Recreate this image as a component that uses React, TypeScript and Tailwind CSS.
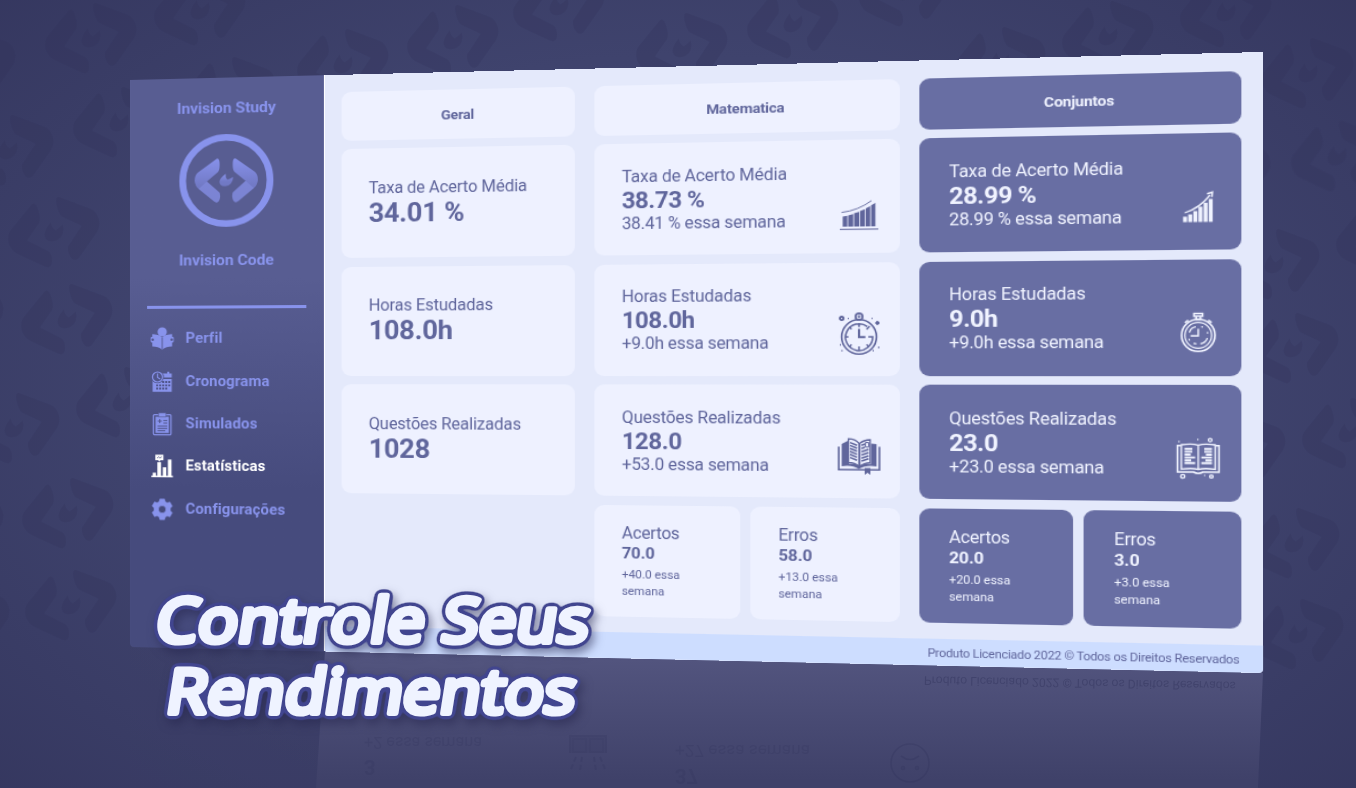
import React from "react";

const LEFT_CHEVRON =
  "M-9.5 -21.5L-27.5 -8.5Q-31 -6 -31 0Q-30.5 5 -27 8L-12 20.5Q-9 23 -7 20Q-5 16 -6.5 12L-19 .8L-8 -8.6Q-6 -11 -6.5 -18Q-7 -22.8 -9.5 -21.5Z";
const RIGHT_CHEVRON =
  "M9.5 -21.5L27.5 -8.5Q31 -6 31 0Q30.5 5 27 8L12 20.5Q9 23 7 20Q5 16 6.5 12L19 .8L8 -8.6Q6 -11 6.5 -18Q7 -22.8 9.5 -21.5Z";
const FLAME =
  "M-.5 -6.5Q-1 -3 1.2 -.8Q3 -1 6.8 -3.2Q6.5 5 -1 5.8Q-6.8 5.5 -6.6 1Q-6.3 -2.5 -.5 -6.5Z";

const PATTERN: [number, number][] = [
  [91, 38], [200, 10], [343, 64], [453, 40], [559, 6], [682, 48], [793, 23], [905, -9],
  [1000, 62], [1108, 36], [1226, 12], [1308, 73], [1337, 156], [1274, 264], [1293, 348],
  [1348, 433], [1240, 450], [1294, 543], [1298, 634], [1382, 238], [1225, 172], [8, 150],
  [119, 122], [54, 232], [230, 92], [67, 319], [14, 428], [122, 402], [68, 513], [71, 605],
  [-42, 318], [-42, 525], [-36, 620], [-30, 65],
];

function Backdrop() {
  return (
    <svg className="absolute inset-0" width="1356" height="788" viewBox="0 0 1356 788">
      <g fill="#34345c" opacity=".28">
        {PATTERN.map(([x, y]) => (
          <g key={`${x}-${y}`} transform={`translate(${x} ${y}) rotate(-15) scale(1.5)`}>
            <path d={LEFT_CHEVRON} />
            <path d={RIGHT_CHEVRON} />
            <path d={FLAME} />
          </g>
        ))}
      </g>
    </svg>
  );
}

function Reflection() {
  return (
    <div className="absolute inset-0 text-[#2e3059]">
      <div className="absolute inset-0 bg-linear-to-b from-[#3d4069] from-82% to-[#3a3c64] to-100% [clip-path:polygon(130px_647px,325px_651px,318px_788px,130px_788px)] opacity-60" />
      <div className="absolute inset-0 bg-linear-to-b from-[#53557f] from-83% to-[#3f4169] to-99% [clip-path:polygon(325px_651px,1263px_673px,1258px_788px,316px_788px)]" />
      <div className="absolute top-[671px] left-[924px] origin-left rotate-1 -scale-y-100 text-[12.2px] whitespace-nowrap opacity-40">
        Produto Licenciado 2022 © Todos os Direitos Reservados
      </div>
      <div className="absolute top-[732px] left-[364px] flex -scale-y-100 flex-col text-[16.2px] leading-[21px] opacity-20">
        <b className="text-xl">3</b>
        <span>+2 essa semana</span>
      </div>
      <div className="absolute top-[740px] left-[675px] flex -scale-y-100 flex-col text-[17.2px] leading-[22px] opacity-20">
        <b className="text-xl">37</b>
        <span>+27 essa semana</span>
      </div>
      <svg className="absolute top-[733px] left-[568px] opacity-20" width="40" height="42" viewBox="0 0 40 42" fill="none" stroke="currentColor" strokeWidth="2">
        <path d="M2 20V3H38V20M5 6H18V19H5ZM22 6H35V19H22Z" fill="currentColor" fillOpacity=".5" />
        <path d="M8 24L3 36M14 24L12 38M26 24L28 38M32 24L37 36" strokeDasharray="5 3" />
      </svg>
      <svg className="absolute top-[741px] left-[888px] opacity-25" width="44" height="44" viewBox="0 0 44 44" fill="none" stroke="currentColor" strokeWidth="1.6">
        <circle cx="22" cy="22" r="19" />
        <path d="M13 15Q22 22 31 15" />
        <circle cx="15" cy="27" r="1.5" />
        <circle cx="29" cy="27" r="1.5" />
      </svg>
    </div>
  );
}

function Logo() {
  return (
    <svg width="94" height="94" viewBox="-47 -47 94 94">
      <defs>
        <linearGradient id="blade" x1="0" y1="0" x2="0" y2="1">
          <stop offset="0" stopColor="#8791ea" />
          <stop offset=".6" stopColor="#727ac6" />
          <stop offset="1" stopColor="#6f77c2" />
        </linearGradient>
      </defs>
      <circle r="42.8" fill="none" stroke="#8893ec" strokeWidth="6.6" />
      <g fill="url(#blade)">
        <path d={LEFT_CHEVRON} />
        <path d={RIGHT_CHEVRON} />
        <path d={FLAME} />
      </g>
      <g fill="#8790e4" opacity=".5">
        <path d="M-19 .8L-27 8L-12 20.5Q-9 23 -7 20Q-5 16 -6.5 12Z" />
        <path d="M19 .8L27 8L12 20.5Q9 23 7 20Q5 16 6.5 12Z" />
      </g>
    </svg>
  );
}

const NAV_BACK = "#50558a";

function ProfileIcon() {
  return (
    <svg width="24" height="24" viewBox="0 0 24 24" fill="currentColor">
      <circle cx="12" cy="5" r="4.6" />
      <path d="M12 10.4Q8 7 2.2 7.3V10H1.4Q.6 10 .6 11.3V14Q.6 15.4 1.4 15.4H2.2V19.5Q8 19.5 12 22.8Q16 19.5 21.8 19.5V15.4H22.6Q23.4 15.4 23.4 14V11.3Q23.4 10 22.6 10H21.8V7.3Q16 7 12 10.4Z" />
      <path d="M12 10.6V22.5" stroke={NAV_BACK} strokeWidth=".9" />
      <circle cx="2.6" cy="12.7" r="1.2" fill={NAV_BACK} />
      <circle cx="21.4" cy="12.7" r="1.2" fill={NAV_BACK} />
    </svg>
  );
}

function CalendarIcon() {
  return (
    <svg width="24" height="24" viewBox="0 0 24 24" fill="currentColor">
      <path d="M2.5 9H21.4V21.8H2.5ZM11 3.5H21.4V7.6H11Z" />
      <path d="M17 1.8H19V5H17Z" />
      <circle cx="7.4" cy="7" r="6.3" fill={NAV_BACK} />
      <circle cx="7.4" cy="7" r="5" fill="none" stroke="currentColor" strokeWidth="1.2" />
      <path d="M7.4 3.6V7.4L10 9" fill="none" stroke="currentColor" strokeWidth="1.1" />
      <g fill={NAV_BACK}>
        <path d="M12 11H14V13H12ZM15 11H17V13H15ZM18 11H20V13H18ZM6 14.4H8V16.2H6ZM9 14.4H11V16.2H9ZM12 14.4H14V16.2H12ZM15 14.4H17V16.2H15ZM18 14.4H20V16.2H18ZM6 17.6H8V19.4H6ZM9 17.6H11V19.4H9ZM12 17.6H14V19.4H12ZM15 17.6H17V19.4H15Z" />
      </g>
    </svg>
  );
}

function ClipboardIcon() {
  return (
    <svg width="24" height="24" viewBox="0 0 24 24">
      <rect x="3.3" y="2.6" width="17.4" height="20" rx="1" fill="none" stroke="currentColor" strokeWidth="1.2" />
      <path d="M5.4 4.6H18.6V20.8H5.4Z" fill="currentColor" />
      <path d="M8.3 .8H15.8V4.8H8.3Z" fill="currentColor" stroke={NAV_BACK} strokeWidth=".6" />
      <path d="M9.6 7V11M7.6 9H11.6M13.2 8.4H17M13.2 11H17M7.4 14H17M7.4 16.3H17M7.4 18.6H15" stroke={NAV_BACK} strokeWidth="1" fill="none" />
    </svg>
  );
}

function BarsIcon() {
  return (
    <svg width="24" height="24" viewBox="0 0 24 24" fill="currentColor">
      <path d="M1.2 21.5H22.6V23H1.2ZM2.6 18.6H5.8V22H2.6ZM7.2 8H10.8V22H7.2ZM12.6 13H16V22H12.6ZM17.6 5.2H21.2V22H17.6Z" />
      <path d="M5.2 .6H13.2V6H10.4L9.2 7.4L8 6H5.2Z" />
      <path d="M7 4L8.6 2.6L9.8 3.8L11.6 2.6" fill="none" stroke="#474c7f" strokeWidth=".8" />
    </svg>
  );
}

function GearIcon() {
  return (
    <svg width="24" height="24" viewBox="-12 -12 24 24" fill="currentColor">
      <path
        fillRule="evenodd"
        d="M-2.3 -10.2H2.3L3 -7.6L5 -6.5L7.6 -7.3L9.9 -3.3L8 -1.3V1.3L9.9 3.3L7.6 7.3L5 6.5L3 7.6L2.3 10.2H-2.3L-3 7.6L-5 6.5L-7.6 7.3L-9.9 3.3L-8 1.3V-1.3L-9.9 -3.3L-7.6 -7.3L-5 -6.5L-3 -7.6ZM0 -3.7A3.7 3.7 0 1 0 0 3.7A3.7 3.7 0 1 0 0 -3.7Z"
        stroke="currentColor"
        strokeWidth=".6"
        strokeLinejoin="round"
      />
    </svg>
  );
}

const NAV = [
  { label: "Perfil", Icon: ProfileIcon, active: false },
  { label: "Cronograma", Icon: CalendarIcon, active: false },
  { label: "Simulados", Icon: ClipboardIcon, active: false },
  { label: "Estatísticas", Icon: BarsIcon, active: true },
  { label: "Configurações", Icon: GearIcon, active: false },
];

function Sidebar() {
  return (
    <aside className="flex w-[190px] shrink-0 flex-col items-center rounded-bl-[4px] bg-linear-to-b from-[#585d92] from-35% to-[#464b7d] to-72% pt-[19.5px] text-[#8893ec]">
      <div className="text-[15.5px] leading-5 font-bold tracking-[-0.12px]">Invision Study</div>
      <div className="mt-[15px]">
        <Logo />
      </div>
      <div className="mt-[22px] text-[15.4px] leading-5 font-bold tracking-[-0.05px]">Invision Code</div>
      <div className="mt-[35.5px] h-[2.5px] w-[156px] bg-[#8893ec]" />
      <nav className="mt-[9.7px] flex w-full flex-col">
        {NAV.map(({ label, Icon, active }) => (
          <div
            key={label}
            className={`flex h-[42.3px] items-center gap-[11px] pl-5 text-[14.6px] font-bold tracking-[0.15px] ${active ? "text-white" : ""}`}
          >
            <Icon />
            <span>{label}</span>
          </div>
        ))}
      </nav>
    </aside>
  );
}

function GrowthLight() {
  return (
    <svg width="38" height="42" viewBox="0 0 38 42" fill="currentColor">
      <path d="M4.5 24.6L8.6 23.8V34H4.5ZM9.4 23.4L13.8 22.2V34H9.4ZM14.6 21.6L19 20.2V34H14.6ZM19.8 19.6L24.2 17.8V34H19.8ZM25 17L28.8 15V34H25ZM29.6 14.2L33.4 12V34H29.6Z" />
      <path d="M3.5 20.6Q18 19 30 9.8" fill="none" stroke="currentColor" strokeWidth=".9" />
      <path d="M2 36.6H36" stroke="currentColor" strokeWidth="1" />
    </svg>
  );
}

function GrowthDark() {
  return (
    <svg width="38" height="42" viewBox="0 0 38 42" fill="currentColor">
      <path d="M6.3 28.5H9.6V33.5H6.3ZM10.6 26.5H13.9V33.5H10.6ZM14.9 23.5H18.2V33.5H14.9ZM19.2 19.5H22.5V33.5H19.2ZM23.5 16H26.8V33.5H23.5ZM27.8 12.5H31.1V33.5H27.8Z" />
      <path d="M7.6 25Q20 21 28.8 9" fill="none" stroke="currentColor" strokeWidth="1.3" />
      <path d="M26.4 7.8L30.8 6.4L30.4 10.8" fill="none" stroke="currentColor" strokeWidth="1.5" />
    </svg>
  );
}

function WatchLight() {
  return (
    <svg width="38" height="42" viewBox="0 0 38 42" fill="none" stroke="currentColor">
      <ellipse cx="19" cy="23" rx="15.4" ry="16.2" strokeWidth="1.6" />
      <path d="M26.3 13.3A12 12.6 0 1 0 31 23H27.2M19 10V13.8" strokeWidth="1.5" />
      <path d="M19 15.6V23.2H24.6" strokeWidth="1.9" />
      <path d="M19 32V36M6.8 23H9.6M10.4 13.8L12.4 15.8M10.4 32.2L12.4 30.2M27.6 32.2L25.6 30.2M25.6 16L28.4 13" strokeWidth="1.4" />
      <circle cx="19" cy="3.9" r="3.1" strokeWidth="1.7" />
      <circle cx="19" cy="3.9" r="1" strokeWidth="1" />
      <circle cx="3.6" cy="5.6" r="1.6" strokeWidth="1.8" />
      <circle cx="35.2" cy="10" r="1.4" fill="currentColor" />
      <path d="M9 5.6H10M31 5.6H30M2 30.5H3M35.8 33H37M3.4 36H4.4M31 36H32" strokeWidth="1.3" />
    </svg>
  );
}

function WatchDark() {
  return (
    <svg width="38" height="42" viewBox="0 0 38 42" fill="none" stroke="currentColor">
      <ellipse cx="19" cy="22.5" rx="14" ry="14.8" strokeWidth="1.6" />
      <ellipse cx="19" cy="22.5" rx="11.2" ry="11.8" strokeWidth="1.2" />
      <path d="M15.4 2.4H22.6V5H15.4ZM17.2 5V8H20.8V5M7.8 10.8L10.6 8.6M30.2 10.8L27.4 8.6" strokeWidth="1.5" />
      <path d="M19 16.4V23H12.6" strokeWidth="1.4" />
      <path d="M11.5 20Q12.7 15.5 17 14.7M26.6 25Q25.3 29.6 20.8 30.3M15 29.8L17.5 30.4M11.1 25.6L11.8 27.4M21.6 14.6L23 15M26.8 19.5V21" strokeWidth="1.2" />
    </svg>
  );
}

function BookLight() {
  return (
    <svg width="38" height="42" viewBox="0 0 38 42" fill="none" stroke="currentColor">
      <path d="M1 10.5V32.3H37V10.5" strokeWidth="1.6" />
      <path d="M3.6 8V29Q13 27.5 18.8 31.5Q25 27.5 34.4 29V8L29.6 7.5V26.5H10V4.5Z" fill="currentColor" stroke="none" />
      <path d="M9.6 3.2Q15.5 3.2 19 7.4V29Q15.5 25.5 9.6 25.3ZM28.8 4Q23 4.2 19.6 7.4V29Q23 25.9 28.8 25.3Z" fill="#eef1ff" strokeWidth="1.3" />
      <path d="M11 6.6L17.2 9.2M11 9.4L17.2 12M11 12.2L17.2 14.8M11 15L17.2 17.6M11 17.8L17.2 20.4M11 20.6L17.2 23.2M21.2 9.2L24 8M21.2 12.2L24 11M21.2 15.2L27.4 13M21.2 18.2L27.4 16M21.2 21.2L27.4 19M21.2 24L27.4 21.8" strokeWidth="1.5" />
      <path d="M24.6 6.6H27.6V10.8H24.6Z" strokeWidth="1" />
      <path d="M24 30.6H29V37L26.5 35L24 37Z" fill="currentColor" stroke="none" />
    </svg>
  );
}

function BookDark() {
  return (
    <svg width="38" height="42" viewBox="0 0 38 42" fill="none" stroke="currentColor">
      <path d="M4.5 7.7H1.6V32H15Q19 34.6 23 32H36.4V7.7H33.5" strokeWidth="1.5" />
      <path d="M4.8 29.4V7Q14 5.4 19 7.4Q24 5.4 33.2 7V29.4Q24 28 19 29.6Q14 28 4.8 29.4ZM19 7.4V30" strokeWidth="1.3" />
      <path d="M7.5 10.8H14M7.5 13.4H14M7.5 16H12.6M7.5 18.6H16.4M7.5 21.2H13M7.5 23.8H16.4M24 10.8H30.5M24 13.4H30.5M25.4 16H30.5M21.6 18.6H30.5M25 21.2H30.5M21.6 23.8H30.5" strokeWidth="1.9" />
      <circle cx="29" cy="2.6" r="1.5" strokeWidth="1.2" />
      <circle cx="6" cy="36" r="1.7" strokeWidth="1.3" />
      <circle cx="30" cy="36" r="1.4" strokeWidth="1.4" />
      <path d="M2.2 4.2H3.4M18 2.2H19.2M23.8 35H25" strokeWidth="1.2" />
    </svg>
  );
}

type CardProps = {
  tone: string;
  label: string;
  value: string;
  note?: string;
  icon?: React.ReactNode;
};

function StatCard({ tone, label, value, note, icon }: CardProps) {
  return (
    <div className={`flex h-[107px] items-center justify-between rounded-[9px] pr-[17.2px] pl-[25.5px] ${tone}`}>
      {note ? (
        <div className="text-[15.8px] leading-[23px] tracking-[-0.16px] whitespace-nowrap">
          <div>{label}</div>
          <div className="text-[22px] leading-[23px] tracking-[-0.45px] font-bold">{value}</div>
          <div className="leading-[22.5px] tracking-[-0.22px]">{note}</div>
        </div>
      ) : (
        <div className="pb-[4px] text-[15.8px] leading-[23px] tracking-[-0.16px] whitespace-nowrap">
          <div>{label}</div>
          <div className="text-[26px] leading-[27px] tracking-[-0.3px] font-bold">{value}</div>
        </div>
      )}
      {icon ? <div className="mb-[17.5px] self-end">{icon}</div> : null}
    </div>
  );
}

function SmallCard({ tone, width, label, value, note }: CardProps & { width: string }) {
  return (
    <div className={`flex h-[107px] flex-col justify-center rounded-[9px] pl-[25.5px] ${width} ${tone}`}>
      <div className="text-[15.7px] leading-[20px] tracking-[-0.25px]">{label}</div>
      <div className="text-[15.2px] leading-[19px] tracking-[-0.1px] font-bold">{value}</div>
      <div className="mt-[3px] w-[66px] text-[11px] leading-[15.5px] tracking-[-0.05px]">{note}</div>
    </div>
  );
}

const LIGHT = "bg-[#eef1ff] text-[#60669c]";
const DARK = "bg-[#686ea3] text-[#f0f3ff]";

function Heading({ tone, children }: { tone: string; children: React.ReactNode }) {
  return (
    <div className={`flex h-[47.5px] items-center justify-center rounded-[9px] text-[13.5px] tracking-[-0.18px] font-bold ${tone}`}>
      {children}
    </div>
  );
}

function Panel() {
  return (
    <div className="relative -m-px w-[1032px] origin-[1px_1px] p-px will-change-transform [transform:matrix3d(0.99337,-0.031575,0,-0.000084425,0,1,0,0,0,0,1,0,130,80,0,1)]">
      <div className="flex h-[567px] w-[1030px]">
        <Sidebar />
        <main className="flex flex-1 flex-col justify-between overflow-hidden rounded-br-[4px] border-l border-white bg-[#e4e9fb]">
          <div className="flex gap-[17.3px] pt-[17.2px] pl-[16.4px]">
            <section className="flex w-[220px] flex-col gap-[8.6px]">
              <Heading tone={LIGHT}>Geral</Heading>
              <StatCard tone={LIGHT} label="Taxa de Acerto Média" value="34.01 %" />
              <StatCard tone={LIGHT} label="Horas Estudadas" value="108.0h" />
              <StatCard tone={LIGHT} label="Questões Realizadas" value="1028" />
            </section>
            <section className="flex w-[275.5px] flex-col gap-[8.6px]">
              <Heading tone={LIGHT}>Matematica</Heading>
              <StatCard tone={LIGHT} label="Taxa de Acerto Média" value="38.73 %" note="38.41 % essa semana" icon={<GrowthLight />} />
              <StatCard tone={LIGHT} label="Horas Estudadas" value="108.0h" note="+9.0h essa semana" icon={<WatchLight />} />
              <StatCard tone={LIGHT} label="Questões Realizadas" value="128.0" note="+53.0 essa semana" icon={<BookLight />} />
              <div className="flex gap-[9px]">
                <SmallCard tone={LIGHT} width="w-[133px]" label="Acertos" value="70.0" note="+40.0 essa semana" />
                <SmallCard tone={LIGHT} width="w-[133.5px]" label="Erros" value="58.0" note="+13.0 essa semana" />
              </div>
            </section>
            <section className="flex w-[275px] flex-col gap-[8.6px]">
              <Heading tone={DARK}>Conjuntos</Heading>
              <StatCard tone={DARK} label="Taxa de Acerto Média" value="28.99 %" note="28.99 % essa semana" icon={<GrowthDark />} />
              <StatCard tone={DARK} label="Horas Estudadas" value="9.0h" note="+9.0h essa semana" icon={<WatchDark />} />
              <StatCard tone={DARK} label="Questões Realizadas" value="23.0" note="+23.0 essa semana" icon={<BookDark />} />
              <div className="flex gap-[9px]">
                <SmallCard tone={DARK} width="w-[133px]" label="Acertos" value="20.0" note="+20.0 essa semana" />
                <SmallCard tone={DARK} width="w-[133px]" label="Erros" value="3.0" note="+3.0 essa semana" />
              </div>
            </section>
          </div>
          <footer className="flex h-[25px] items-center justify-end bg-[#cdddff] pt-[5px] pr-[19.5px] pb-0.5 text-[10.9px] tracking-[-0.23px] whitespace-nowrap text-[#60669c]">
            Produto Licenciado 2022 © Todos os Direitos Reservados
          </footer>
        </main>
      </div>
    </div>
  );
}

function Title() {
  return (
    <svg
      className="absolute inset-0 font-['Open_Sans',sans-serif] text-[61px] font-medium"
      width="1356"
      height="788"
      strokeLinejoin="round"
      strokeLinecap="round"
    >
      <defs>
        <filter id="halo" filterUnits="userSpaceOnUse" x="120" y="560" width="520" height="200" colorInterpolationFilters="sRGB">
          <feGaussianBlur in="SourceAlpha" stdDeviation="2.6" result="soft" />
          <feComponentTransfer in="soft" result="grown">
            <feFuncA type="linear" slope="12" intercept="-0.5" />
          </feComponentTransfer>
          <feFlood floodColor="#41458f" />
          <feComposite in2="grown" operator="in" result="outline" />
          <feGaussianBlur in="grown" stdDeviation="5" result="blurred" />
          <feOffset in="blurred" dx="3" dy="5" result="moved" />
          <feFlood floodColor="#23244b" floodOpacity=".5" />
          <feComposite in2="moved" operator="in" result="shade" />
          <feMerge>
            <feMergeNode in="shade" />
            <feMergeNode in="outline" />
            <feMergeNode in="SourceGraphic" />
          </feMerge>
        </filter>
      </defs>
      <g filter="url(#halo)" fill="#eff3ff" stroke="#eff3ff" strokeWidth="6">
        <text transform="translate(153.5 642.2) skewX(-9)" textLength="433" lengthAdjust="spacingAndGlyphs">Controle Seus</text>
        <text transform="translate(164 713.2) skewX(-9)" textLength="409" lengthAdjust="spacingAndGlyphs">Rendimentos</text>
      </g>
    </svg>
  );
}

export default function App() {
  return (
    <div className="relative h-[788px] w-[1356px] overflow-hidden bg-[radial-gradient(ellipse_72%_78%_at_50%_50%,#444876_0%,#3f436d_55%,#34365e_100%)] font-['Roboto',sans-serif]">
      <Backdrop />
      <Reflection />
      <Panel />
      <Title />
    </div>
  );
}
